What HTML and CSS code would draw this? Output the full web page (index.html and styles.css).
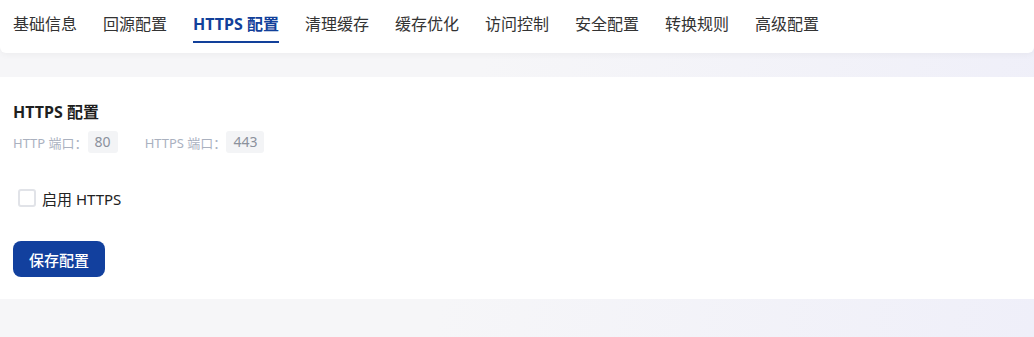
FILE: index.html
```html
<!DOCTYPE html>
<html lang="zh-CN">
<head>
    <meta charset="UTF-8">
    <meta name="viewport" content="width=device-width, initial-scale=1.0">
    <title>HTTPS 配置</title>
    <link rel="stylesheet" href="styles.css">
</head>
<body>
    <nav class="tabs">
        <a class="tab">基础信息</a>
        <a class="tab">回源配置</a>
        <a class="tab active">HTTPS 配置</a>
        <a class="tab">清理缓存</a>
        <a class="tab">缓存优化</a>
        <a class="tab">访问控制</a>
        <a class="tab">安全配置</a>
        <a class="tab">转换规则</a>
        <a class="tab">高级配置</a>
    </nav>

    <section class="card">
        <h2 class="card-title">HTTPS 配置</h2>
        <div class="ports">
            <span class="port-label">HTTP 端口：</span>
            <span class="port-value">80</span>
            <span class="port-label second">HTTPS 端口：</span>
            <span class="port-value">443</span>
        </div>

        <label class="check">
            <span class="check-box"></span>
            <span class="check-text">启用 HTTPS</span>
        </label>

        <button class="btn-save">保存配置</button>
    </section>
</body>
</html>
```

FILE: styles.css
```css
body {
    margin: 0;
    padding: 0;
    height: 100vh;
    font-family: "Noto Sans", "Noto Sans CJK SC", sans-serif;
    color: #333;
    background: linear-gradient(100deg, #f6f6f8 0%, #f6f6f8 45%, #efeff9 100%);
    overflow: hidden;
}

/* 顶部标签栏 */
.tabs {
    display: flex;
    align-items: flex-start;
    height: 53px;
    background-color: white;
    border-radius: 0 0 6px 6px;
    box-shadow: 0 2px 6px rgba(0, 0, 0, 0.04);
}

.tab {
    padding: 12px 13px 5px;
    font-size: 16px;
    line-height: 24px;
    color: #333;
    border-bottom: 2px solid transparent;
    cursor: pointer;
    white-space: nowrap;
}

.tab.active {
    color: #12409a;
    font-weight: 700;
    border-bottom-color: #12409a;
    padding-left: 0;
    padding-right: 0;
    margin: 0 13px;
}

/* 内容卡片 */
.card {
    margin-top: 24px;
    height: 222px;
    box-sizing: border-box;
    padding: 23px 13px 22px;
    background-color: white;
}

.card-title {
    margin: 0;
    font-size: 16px;
    font-weight: 700;
    line-height: 24px;
    color: #1f1f1f;
}

.ports {
    display: flex;
    align-items: center;
    margin-top: 7px;
    height: 22px;
    font-size: 13px;
}

.port-label {
    color: #aab1bf;
}

.port-label.second {
    margin-left: 27px;
}

.port-value {
    padding: 0 7px;
    font-size: 14px;
    line-height: 22px;
    border-radius: 3px;
    background-color: #f3f4f6;
    color: #8b919c;
}

.check {
    display: flex;
    align-items: center;
    margin-top: 34px;
    margin-left: 5px;
    height: 22px;
}

.check-box {
    width: 14px;
    height: 14px;
    border: 2px solid #e1e3e8;
    border-radius: 3px;
    background-color: white;
}

.check-text {
    margin-left: 6px;
    font-size: 15px;
    color: #222;
}

.btn-save {
    display: block;
    margin-top: 32px;
    width: 92px;
    height: 36px;
    border: none;
    border-radius: 8px;
    background-color: #12409e;
    color: white;
    font-family: inherit;
    font-size: 15px;
    font-weight: 500;
    cursor: pointer;
}
```
